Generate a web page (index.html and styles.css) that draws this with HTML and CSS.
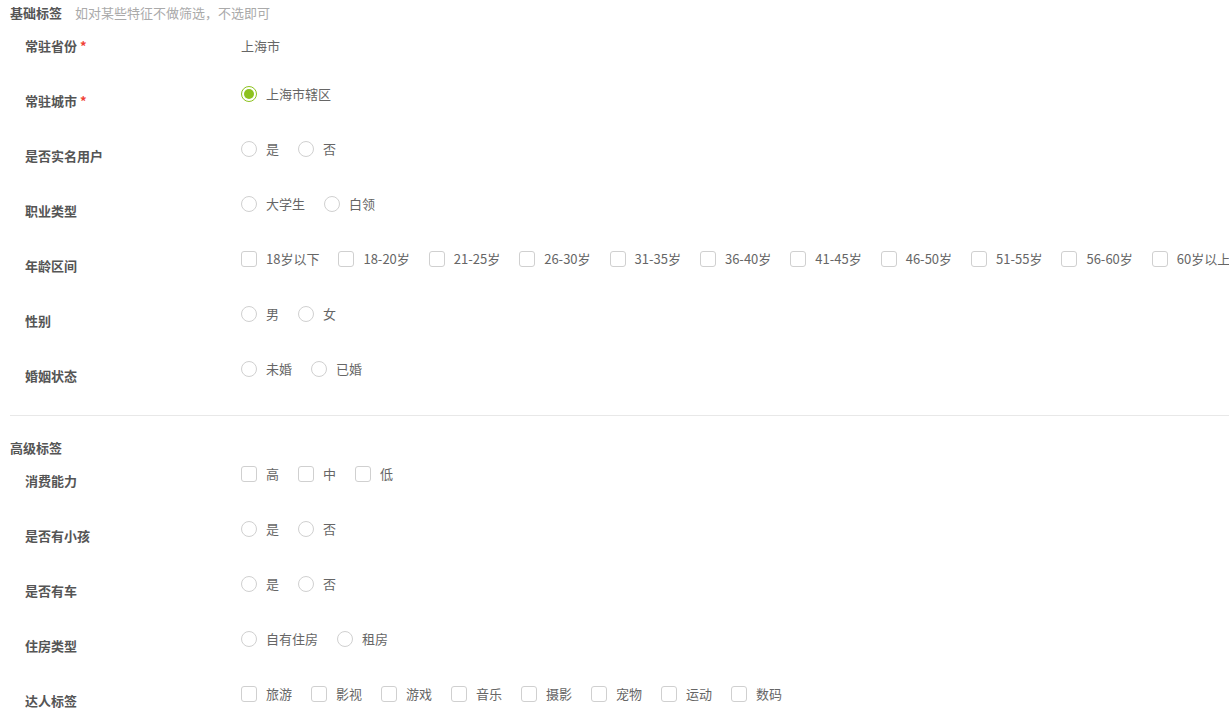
FILE: index.html
```html
<!DOCTYPE html>
<html lang="zh">
<head>
<meta charset="utf-8">
<link rel="stylesheet" href="styles.css">
</head>
<body>
<div class="page">
  <section class="section">
    <div class="section-title">基础标签<span class="hint">如对某些特征不做筛选，不选即可</span></div>
    <div class="row">
      <div class="label">常驻省份<span class="req">*</span></div>
      <div class="controls static">上海市</div>
    </div>
    <div class="row">
      <div class="label">常驻城市<span class="req">*</span></div>
      <div class="controls">
        <label class="opt"><span class="radio checked"></span>上海市辖区</label>
      </div>
    </div>
    <div class="row">
      <div class="label">是否实名用户</div>
      <div class="controls">
        <label class="opt"><span class="radio"></span>是</label>
        <label class="opt"><span class="radio"></span>否</label>
      </div>
    </div>
    <div class="row">
      <div class="label">职业类型</div>
      <div class="controls">
        <label class="opt"><span class="radio"></span>大学生</label>
        <label class="opt"><span class="radio"></span>白领</label>
      </div>
    </div>
    <div class="row">
      <div class="label">年龄区间</div>
      <div class="controls">
        <label class="opt"><span class="check"></span>18岁以下</label>
        <label class="opt"><span class="check"></span>18-20岁</label>
        <label class="opt"><span class="check"></span>21-25岁</label>
        <label class="opt"><span class="check"></span>26-30岁</label>
        <label class="opt"><span class="check"></span>31-35岁</label>
        <label class="opt"><span class="check"></span>36-40岁</label>
        <label class="opt"><span class="check"></span>41-45岁</label>
        <label class="opt"><span class="check"></span>46-50岁</label>
        <label class="opt"><span class="check"></span>51-55岁</label>
        <label class="opt"><span class="check"></span>56-60岁</label>
        <label class="opt"><span class="check"></span>60岁以上</label>
      </div>
    </div>
    <div class="row">
      <div class="label">性别</div>
      <div class="controls">
        <label class="opt"><span class="radio"></span>男</label>
        <label class="opt"><span class="radio"></span>女</label>
      </div>
    </div>
    <div class="row">
      <div class="label">婚姻状态</div>
      <div class="controls">
        <label class="opt"><span class="radio"></span>未婚</label>
        <label class="opt"><span class="radio"></span>已婚</label>
      </div>
    </div>
  </section>
  <hr class="divider">
  <section class="section">
    <div class="section-title">高级标签</div>
    <div class="row">
      <div class="label">消费能力</div>
      <div class="controls">
        <label class="opt"><span class="check"></span>高</label>
        <label class="opt"><span class="check"></span>中</label>
        <label class="opt"><span class="check"></span>低</label>
      </div>
    </div>
    <div class="row">
      <div class="label">是否有小孩</div>
      <div class="controls">
        <label class="opt"><span class="radio"></span>是</label>
        <label class="opt"><span class="radio"></span>否</label>
      </div>
    </div>
    <div class="row">
      <div class="label">是否有车</div>
      <div class="controls">
        <label class="opt"><span class="radio"></span>是</label>
        <label class="opt"><span class="radio"></span>否</label>
      </div>
    </div>
    <div class="row">
      <div class="label">住房类型</div>
      <div class="controls">
        <label class="opt"><span class="radio"></span>自有住房</label>
        <label class="opt"><span class="radio"></span>租房</label>
      </div>
    </div>
    <div class="row">
      <div class="label">达人标签</div>
      <div class="controls">
        <label class="opt"><span class="check"></span>旅游</label>
        <label class="opt"><span class="check"></span>影视</label>
        <label class="opt"><span class="check"></span>游戏</label>
        <label class="opt"><span class="check"></span>音乐</label>
        <label class="opt"><span class="check"></span>摄影</label>
        <label class="opt"><span class="check"></span>宠物</label>
        <label class="opt"><span class="check"></span>运动</label>
        <label class="opt"><span class="check"></span>数码</label>
      </div>
    </div>
  </section>
</div>
</body>
</html>
```
FILE: styles.css
```css
html, body {
  margin: 0;
  padding: 0;
  background: #fff;
}
body {
  font-family: "Noto Sans CJK SC", "Noto Sans", sans-serif;
  font-size: 13px;
  color: #666;
  overflow: hidden;
}
.page {
  padding: 3px 0 0 10px;
}
.section-title {
  font-weight: bold;
  color: #555;
  font-size: 13px;
  line-height: 20px;
  height: 20px;
  margin-bottom: 6px;
}
.hint {
  font-weight: normal;
  color: #aaa;
  font-size: 13px;
  margin-left: 13px;
}
.row {
  display: flex;
  height: 55px;
  padding-left: 15px;
}
.label {
  width: 216px;
  flex: none;
  margin-top: 7px;
  line-height: 20px;
  height: 20px;
  font-weight: bold;
  color: #555;
  white-space: nowrap;
}
.req {
  color: #f04134;
  margin-left: 3px;
}
.controls {
  display: flex;
  align-items: center;
  height: 20px;
  line-height: 20px;
  white-space: nowrap;
}
.controls.static {
  margin-top: 7px;
}
.opt {
  display: flex;
  align-items: center;
  margin-right: 19px;
  color: #666;
}
.radio, .check {
  display: inline-block;
  box-sizing: border-box;
  width: 16px;
  height: 16px;
  border: 1px solid #d0d0d0;
  background: #fff;
  margin-right: 9px;
  flex: none;
}
.radio {
  border-radius: 50%;
  position: relative;
}
.check {
  border-radius: 3px;
}
.radio.checked {
  border-color: #8dc21f;
}
.radio.checked::after {
  content: "";
  position: absolute;
  left: 2px;
  top: 2px;
  width: 10px;
  height: 10px;
  border-radius: 50%;
  background: #8dc21f;
}
.divider {
  border: 0;
  border-top: 1px solid #e8e8e8;
  margin: 1px 0 22px 0;
  height: 0;
}
```
